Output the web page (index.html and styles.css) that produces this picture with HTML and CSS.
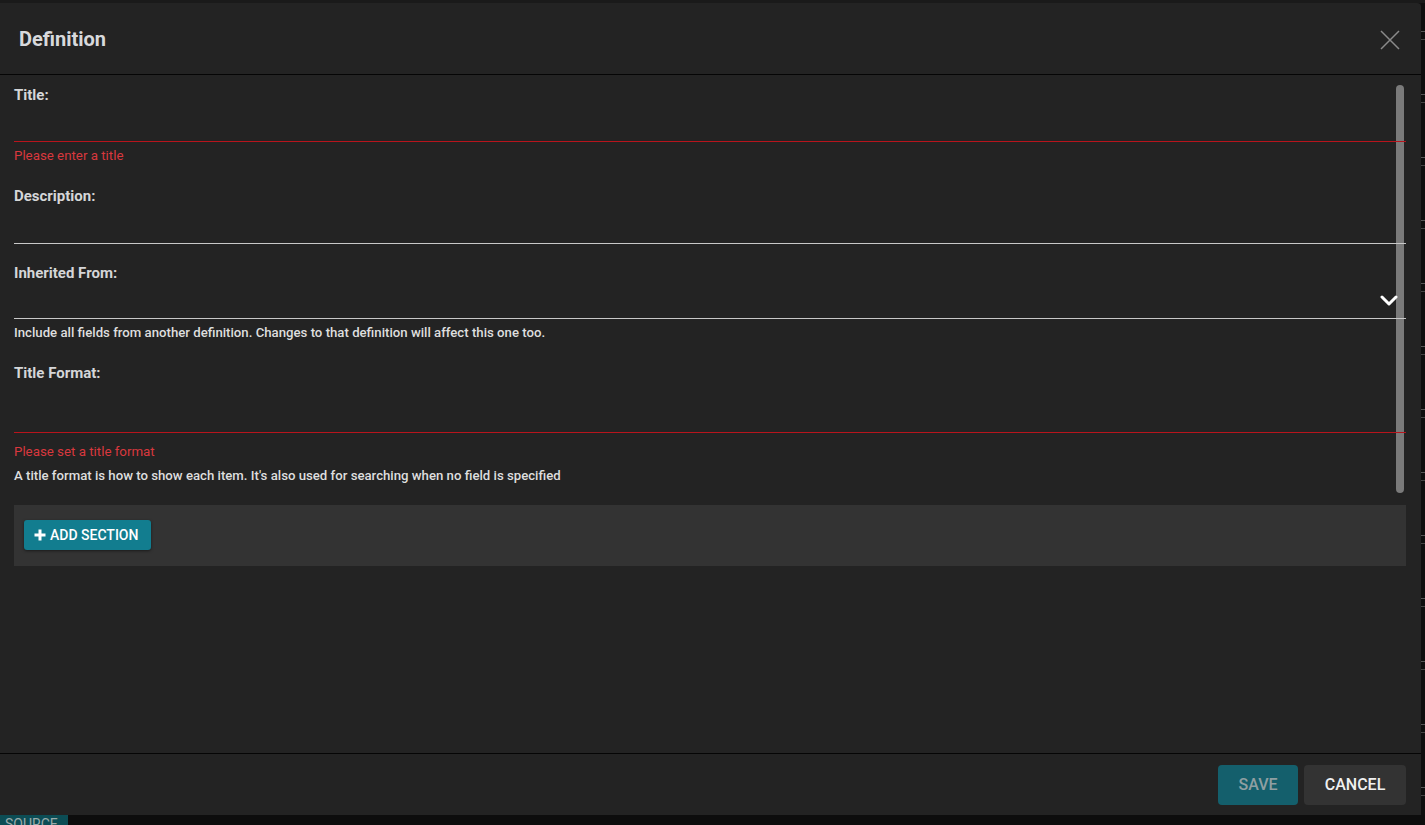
FILE: index.html
```html
<!DOCTYPE html>
<html>
<head>
<meta charset="utf-8">
<link rel="stylesheet" href="styles.css">
</head>
<body>
<div class="topstrip"></div>
<div class="middle">
  <div class="modal">
    <div class="header">
      <h2 class="title">Definition</h2>
      <button class="close" aria-label="Close">
        <svg width="20" height="20" viewBox="0 0 20 20"><path d="M1 1 L19 19 M19 1 L1 19" stroke="#8a8a8a" stroke-width="1.5" fill="none"/></svg>
      </button>
    </div>
    <div class="body">
      <div class="scrollthumb"></div>
      <div class="field f-title">
        <label class="label">Title:</label>
        <div class="input error h36"></div>
        <div class="err">Please enter a title</div>
      </div>
      <div class="field f-desc">
        <label class="label">Description:</label>
        <div class="input h37"></div>
      </div>
      <div class="field f-inh">
        <label class="label">Inherited From:</label>
        <div class="input select h35">
          <svg class="chev" width="18" height="12" viewBox="0 0 18 12"><path d="M2 2 L9 9 L16 2" stroke="#ffffff" stroke-width="3" fill="none" stroke-linecap="round" stroke-linejoin="round"/></svg>
        </div>
        <div class="help">Include all fields from another definition. Changes to that definition will affect this one too.</div>
      </div>
      <div class="field f-fmt">
        <label class="label">Title Format:</label>
        <div class="input error h50"></div>
        <div class="err">Please set a title format</div>
        <div class="help">A title format is how to show each item. It's also used for searching when no field is specified</div>
      </div>
      <div class="section">
        <button class="add">
          <svg width="12" height="12" viewBox="0 0 12 12"><path d="M6 0.5 V11.5 M0.5 6 H11.5" stroke="#ffffff" stroke-width="3"/></svg>
          ADD SECTION
        </button>
      </div>
    </div>
    <div class="footer">
      <button class="btn save">SAVE</button>
      <button class="btn cancel">CANCEL</button>
    </div>
  </div>
  <div class="rightstrip"></div>
</div>
<div class="bottomstrip"><div class="tab">SOURCE</div></div>
</body>
</html>
```
FILE: styles.css
```css
html, body {
  margin: 0;
  padding: 0;
  width: 1425px;
  height: 825px;
  overflow: hidden;
  background: #111111;
  font-family: Roboto, "Liberation Sans", sans-serif;
}
.topstrip {
  height: 3px;
  background: #1a1a1a;
}
.middle {
  display: flex;
  height: 812px;
}
.modal {
  width: 1421px;
  height: 812px;
  background: #232323;
  display: flex;
  flex-direction: column;
  border-top-right-radius: 4px;
}
.rightstrip {
  flex: 1;
  background: repeating-linear-gradient(to bottom, #0e0e0e 0px, #0e0e0e 28px, #555 28px, #555 29px, #0e0e0e 29px, #0e0e0e 36px, #444 36px, #444 37px, #0e0e0e 37px, #0e0e0e 63px);
}
.header {
  height: 71px;
  flex: none;
  display: flex;
  align-items: center;
  justify-content: space-between;
  padding: 0 21px 0 19px;
  border-bottom: 1px solid #050505;
}
.title {
  margin: 0;
  font-size: 20px;
  font-weight: 700;
  color: #d8d9dc;
  line-height: 24px;
}
.close {
  background: none;
  border: none;
  padding: 0;
  width: 20px;
  height: 20px;
  margin-top: 2px;
}
.close svg { display: block; }
.body {
  flex: 1;
  position: relative;
  padding: 10px 15px 0 14px;
}
.scrollthumb {
  position: absolute;
  left: 1396px;
  top: 10px;
  width: 8px;
  height: 408px;
  border-radius: 4px;
  background: #7a7a7a;
}
.field { position: relative; }
.label {
  display: block;
  font-size: 15px;
  font-weight: 700;
  line-height: 20px;
  color: #d5d6d8;
}
.input {
  border-bottom: 1px solid #c8c8c8;
  position: relative;
}
.input.error { border-bottom-color: #b8141c; }
.h35 { height: 35px; }
.h36 { height: 36px; }
.h37 { height: 37px; }
.h50 { height: 49px; }
.chev {
  position: absolute;
  right: 8px;
  top: 12px;
}
.err {
  margin-top: 6px;
  font-size: 13.3px;
  line-height: 16px;
  color: #d9383e;
}
.help {
  margin-top: 6px;
  font-size: 13.2px;
  line-height: 16px;
  color: #dedede;
  font-weight: 500;
}
.f-title { margin-bottom: 22px; }
.f-desc { margin-bottom: 19px; }
.f-inh { margin-bottom: 22px; }
.f-fmt .err { margin-top: 11px; }
.f-fmt .help { margin-top: 8px; }
.f-fmt { margin-bottom: 21px; }
.section {
  background: #333333;
  height: 61px;
  box-sizing: border-box;
  padding: 15px 10px;
  position: relative;
}
.add {
  height: 30px;
  width: 127px;
  border: none;
  border-radius: 3px;
  background: #127d8f;
  color: #ffffff;
  font-family: Roboto, "Liberation Sans", sans-serif;
  font-size: 14px;
  font-weight: 500;
  display: flex;
  align-items: center;
  gap: 4px;
  padding: 0 0 0 10px;
  box-shadow: 0 1px 3px rgba(0,0,0,0.5);
}
.add svg { display: block; }
.footer {
  height: 61px;
  flex: none;
  border-top: 1px solid #050505;
  display: flex;
  justify-content: flex-end;
  align-items: center;
  gap: 6px;
  padding: 0 15px 0 0;
}
.btn {
  height: 40px;
  border: none;
  border-radius: 4px;
  font-family: Roboto, "Liberation Sans", sans-serif;
  font-size: 16px;
  font-weight: 500;
  padding: 0;
}
.save {
  width: 80px;
  background: #145f6c;
  color: #8f9fa2;
}
.cancel {
  width: 102px;
  background: #333333;
  color: #f0f0f0;
}
.bottomstrip {
  height: 10px;
  background: #0d0d0d;
  overflow: hidden;
}
.tab {
  width: 68px;
  height: 10px;
  background: #0c4d55;
  color: #9aa;
  font-size: 14px;
  line-height: 18px;
  padding-left: 5px;
  box-sizing: border-box;
}
```
